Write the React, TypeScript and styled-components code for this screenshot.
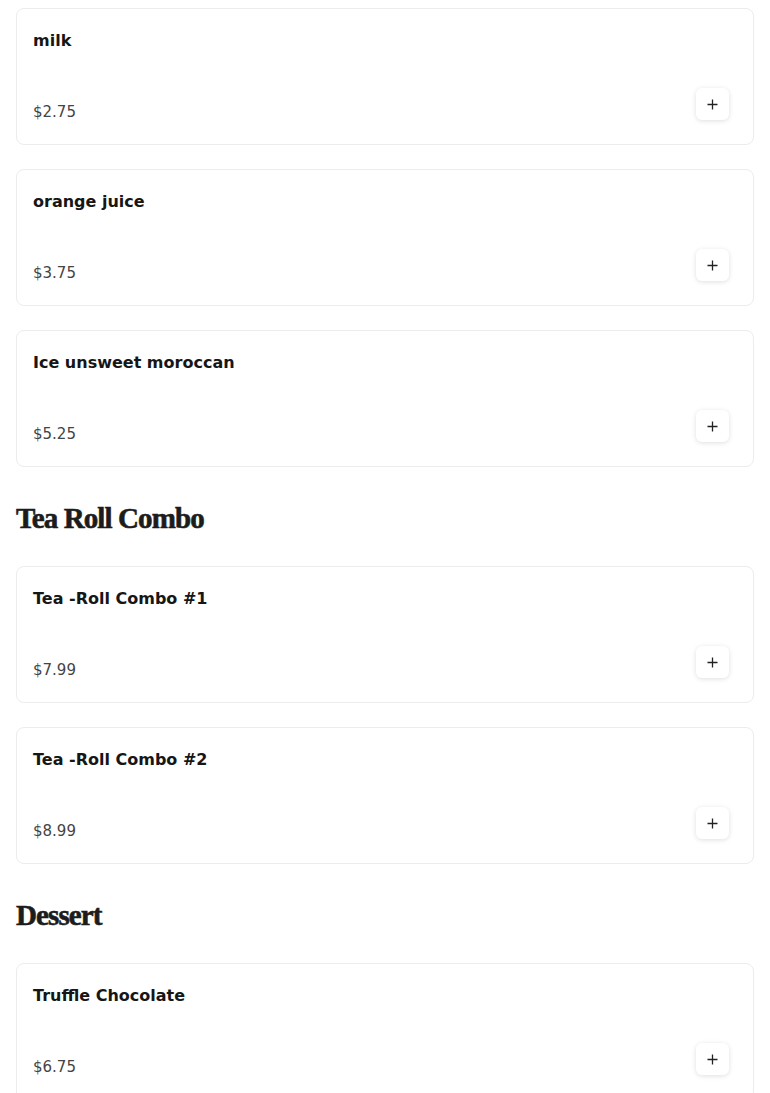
import React from 'react';
import styled, { createGlobalStyle } from 'styled-components';

interface MenuItem {
  name: string;
  price: string;
}

interface MenuSection {
  title?: string;
  items: MenuItem[];
}

const sections: MenuSection[] = [
  {
    items: [
      { name: 'milk', price: '$2.75' },
      { name: 'orange juice', price: '$3.75' },
      { name: 'Ice unsweet moroccan', price: '$5.25' },
    ],
  },
  {
    title: 'Tea Roll Combo',
    items: [
      { name: 'Tea -Roll Combo #1', price: '$7.99' },
      { name: 'Tea -Roll Combo #2', price: '$8.99' },
    ],
  },
  {
    title: 'Dessert',
    items: [{ name: 'Truffle Chocolate', price: '$6.75' }],
  },
];

const GlobalStyle = createGlobalStyle`
  body {
    margin: 0;
    background: #fff;
    font-family: "DejaVu Sans", "Open Sans", sans-serif;
  }
`;

const Page = styled.main`
  display: flex;
  flex-direction: column;
  gap: 24px;
  padding: 8px 16px;
`;

const SectionTitle = styled.h2`
  margin: 0;
  padding: 9px 0 6px;
  font-family: "Liberation Serif", "DejaVu Serif", serif;
  font-size: 29px;
  font-weight: 700;
  line-height: 36px;
  letter-spacing: -0.9px;
  color: #1c1c1c;
  -webkit-text-stroke: 0.6px #1c1c1c;
`;

const Card = styled.div`
  box-sizing: border-box;
  height: 137px;
  display: flex;
  flex-direction: column;
  justify-content: space-between;
  padding: 19px 24px 19px 16px;
  border: 1px solid #ececec;
  border-radius: 8px;
  background: #fff;
`;

const Name = styled.div`
  font-size: 16px;
  font-weight: 700;
  line-height: 26px;
  color: #161616;
`;

const Bottom = styled.div`
  display: flex;
  align-items: flex-end;
  justify-content: space-between;
`;

const Price = styled.div`
  font-size: 15px;
  line-height: 26px;
  color: #444;
`;

const AddButton = styled.button`
  width: 33px;
  height: 32px;
  margin-bottom: 5px;
  display: flex;
  align-items: center;
  justify-content: center;
  padding: 0;
  border: none;
  border-radius: 6px;
  background: #fff;
  box-shadow: 0 1px 5px rgba(0, 0, 0, 0.13);
  color: #222;
  cursor: pointer;
`;

const PlusIcon = () => (
  <svg width="11" height="11" viewBox="0 0 11 11" fill="none">
    <path d="M5.5 0.5v10M0.5 5.5h10" stroke="currentColor" strokeWidth="1.3" />
  </svg>
);

const ItemCard = ({ name, price }: MenuItem) => (
  <Card>
    <Name>{name}</Name>
    <Bottom>
      <Price>{price}</Price>
      <AddButton aria-label={`Add ${name}`}>
        <PlusIcon />
      </AddButton>
    </Bottom>
  </Card>
);

const App = () => (
  <>
    <GlobalStyle />
    <Page>
      {sections.map((section, i) => (
        <React.Fragment key={i}>
          {section.title && <SectionTitle>{section.title}</SectionTitle>}
          {section.items.map((item) => (
            <ItemCard key={item.name} {...item} />
          ))}
        </React.Fragment>
      ))}
    </Page>
  </>
);

export default App;
